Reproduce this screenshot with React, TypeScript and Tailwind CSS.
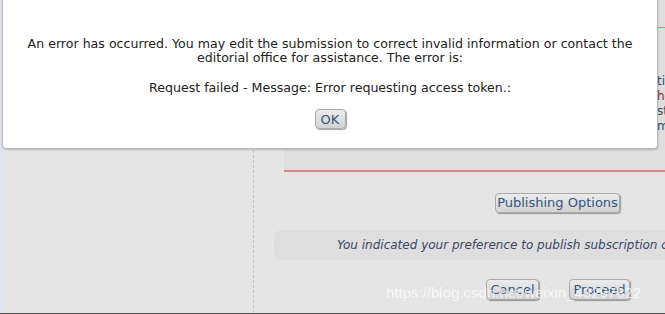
import React from 'react';

const btn =
  'rounded-[4px] border border-[#a9a9a9] bg-gradient-to-b from-[#ececec] to-[#d2d2d2] shadow-[1px_1px_1px_rgba(0,0,0,0.35)] text-[#34557f] text-[13px] leading-none';

export default function App() {
  return (
    <div
      className="relative w-[665px] h-[314px] overflow-hidden bg-[#e5e5e5] border-b border-[#555]"
      style={{ fontFamily: '"DejaVu Sans", Verdana, sans-serif' }}
    >
      <div className="flex h-full">
        {/* left strip + sidebar */}
        <div className="w-[3px] shrink-0 bg-[#dfe6ef]" />
        <div className="w-[251px] shrink-0 border-r border-dashed border-[#c6c6c6]" />

        {/* main column */}
        <div className="flex-1 min-w-0 flex flex-col">
          <div className="ml-[30px] h-[172px] bg-[#dedede] border-b-2 border-[#d98586]">
            <div className="mt-[27px] border-t border-[#d98586] pl-[373px] pt-[46px] text-[12px] leading-[15px] text-[#3b4a6b] whitespace-nowrap">
              <div>tion</div>
              <div className="text-[#8a2a2a]">he</div>
              <div>st</div>
              <div>ment</div>
            </div>
          </div>

          <div className="mt-[18px] ml-[241px]">
            <button className={`${btn} h-[20px] w-[125px]`}>Publishing Options</button>
          </div>

          <div className="mt-[16px] ml-[20px] w-[500px] shrink-0 h-[30px] rounded-[8px] bg-[#dedede] flex items-center pl-[63px] whitespace-nowrap">
            <span className="italic text-[12px] text-[#3a4663]">
              You indicated your preference to publish subscription or open access
            </span>
          </div>

          <div className="mt-[19px] ml-[232px] flex gap-[30px]">
            <button className={`${btn} h-[21px] w-[53px] shrink-0`}>Cancel</button>
            <button className={`${btn} h-[21px] w-[61px] shrink-0 text-[#9a9a9a]`}>Proceed</button>
          </div>
        </div>
      </div>

      {/* error dialog */}
      <div className="absolute left-[2px] top-[-2px] w-[656px] h-[151px] bg-white border border-[#b9b9b9] rounded-b-[4px] shadow-[0_1px_2px_rgba(0,0,0,0.2)] flex flex-col items-center text-center text-[12.6px] leading-[14px] text-[#222]">
        <p className="mt-[38px] px-[20px]">
          An error has occurred. You may edit the submission to correct invalid information or contact the
          editorial office for assistance. The error is:
        </p>
        <p className="mt-[16px]">Request failed - Message: Error requesting access token.:</p>
        <button className={`${btn} mt-[14px] h-[20px] w-[31px]`}>OK</button>
      </div>

      {/* watermark */}
      <div
        className="absolute left-[386px] top-[285px] text-[15px] leading-none text-white/70 whitespace-nowrap"
        style={{ fontFamily: '"Liberation Sans", Arial, sans-serif' }}
      >
        https://blog.csdn.net/weixin_43297822
      </div>
    </div>
  );
}
